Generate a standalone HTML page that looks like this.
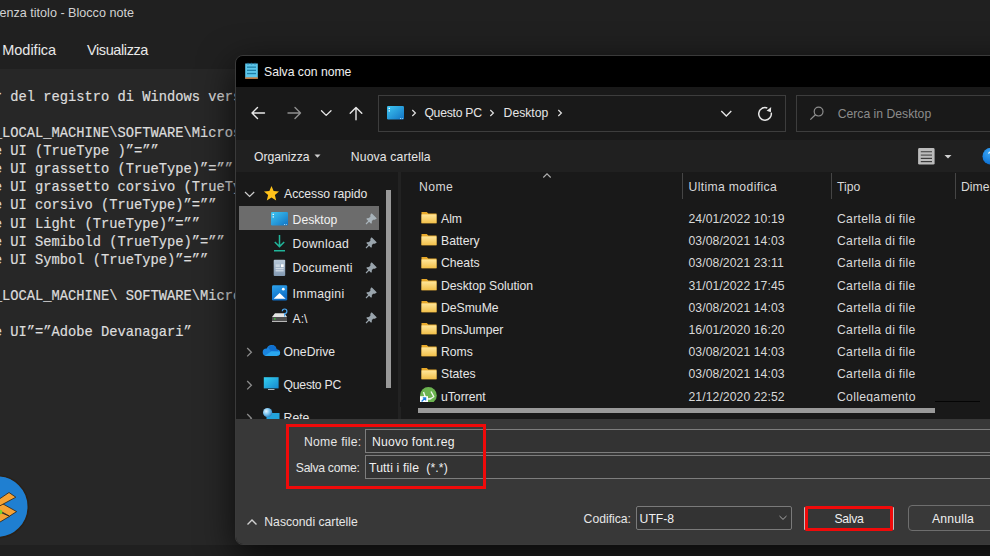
<!DOCTYPE html>
<html><head><meta charset="utf-8"><style>
html,body{margin:0;padding:0;width:990px;height:556px;overflow:hidden;background:#202020}
.t{position:absolute;white-space:pre}
.r{position:absolute}
svg.r{overflow:visible}
</style></head><body>
<div class="r" style="left:0px;top:0px;width:990px;height:69px;background:#202020"></div>
<div class="r" style="left:0px;top:69px;width:990px;height:476px;background:#272727"></div>
<div class="r" style="left:0px;top:545px;width:990px;height:11px;background:#202020"></div>
<div class="t" style="left:-0.50px;top:4.63px;font-size:12.6px;line-height:16px;color:#d2d2d2;font-family:'Liberation Sans',sans-serif;">enza titolo - Blocco note</div>
<div class="t" style="left:2.20px;top:41.07px;font-size:14.5px;line-height:19px;color:#e8e8e8;font-family:'Liberation Sans',sans-serif;">Modifica</div>
<div class="t" style="left:87.00px;top:41.07px;font-size:14.5px;line-height:19px;color:#e8e8e8;font-family:'Liberation Sans',sans-serif;letter-spacing:-0.4px">Visualizza</div>
<div class="t" style="left:-6.30px;top:88.64px;font-size:13.75px;line-height:18px;color:#dcdcdc;font-family:'Liberation Mono',monospace;white-space:pre;-webkit-text-stroke:0.2px #dcdcdc">r del registro di Windows versione 5.00</div>
<div class="t" style="left:-6.30px;top:124.94px;font-size:13.75px;line-height:18px;color:#dcdcdc;font-family:'Liberation Mono',monospace;white-space:pre;-webkit-text-stroke:0.2px #dcdcdc">_LOCAL_MACHINE\SOFTWARE\Microsoft\Windows NT</div>
<div class="t" style="left:-6.30px;top:143.04px;font-size:13.75px;line-height:18px;color:#dcdcdc;font-family:'Liberation Mono',monospace;white-space:pre;-webkit-text-stroke:0.2px #dcdcdc">e UI (TrueType )”=””</div>
<div class="t" style="left:-6.30px;top:161.14px;font-size:13.75px;line-height:18px;color:#dcdcdc;font-family:'Liberation Mono',monospace;white-space:pre;-webkit-text-stroke:0.2px #dcdcdc">e UI grassetto (TrueType)”=””</div>
<div class="t" style="left:-6.30px;top:179.34px;font-size:13.75px;line-height:18px;color:#dcdcdc;font-family:'Liberation Mono',monospace;white-space:pre;-webkit-text-stroke:0.2px #dcdcdc">e UI grassetto corsivo (TrueType)”=””</div>
<div class="t" style="left:-6.30px;top:197.44px;font-size:13.75px;line-height:18px;color:#dcdcdc;font-family:'Liberation Mono',monospace;white-space:pre;-webkit-text-stroke:0.2px #dcdcdc">e UI corsivo (TrueType)”=””</div>
<div class="t" style="left:-6.30px;top:215.64px;font-size:13.75px;line-height:18px;color:#dcdcdc;font-family:'Liberation Mono',monospace;white-space:pre;-webkit-text-stroke:0.2px #dcdcdc">e UI Light (TrueType)”=””</div>
<div class="t" style="left:-6.30px;top:233.74px;font-size:13.75px;line-height:18px;color:#dcdcdc;font-family:'Liberation Mono',monospace;white-space:pre;-webkit-text-stroke:0.2px #dcdcdc">e UI Semibold (TrueType)”=””</div>
<div class="t" style="left:-6.30px;top:251.84px;font-size:13.75px;line-height:18px;color:#dcdcdc;font-family:'Liberation Mono',monospace;white-space:pre;-webkit-text-stroke:0.2px #dcdcdc">e UI Symbol (TrueType)”=””</div>
<div class="t" style="left:-6.30px;top:288.14px;font-size:13.75px;line-height:18px;color:#dcdcdc;font-family:'Liberation Mono',monospace;white-space:pre;-webkit-text-stroke:0.2px #dcdcdc">_LOCAL_MACHINE\ SOFTWARE\Microsoft\Windows NT</div>
<div class="t" style="left:-6.30px;top:324.44px;font-size:13.75px;line-height:18px;color:#dcdcdc;font-family:'Liberation Mono',monospace;white-space:pre;-webkit-text-stroke:0.2px #dcdcdc">e UI”=”Adobe Devanagari”</div>
<svg class="r" style="left:0;top:474px" width="30" height="66" viewBox="0 474 30 66">
<circle cx="-2.7" cy="506.7" r="31" fill="#1f7fd1" stroke="#2a2118" stroke-width="1.6"/>
<polygon points="-3,510.8 9.6,516.3 -3,523.8" fill="#f4a235" stroke="#2a2118" stroke-width="0.8"/>
<polygon points="-3,500.6 16.6,511.6 9.6,516.1 -3,509.4" fill="#f4a235" stroke="#2a2118" stroke-width="0.8" stroke-linejoin="round"/>
<polygon points="-3,500.6 9,492.5 15.8,497.2 -3,507.4" fill="#f4a235" stroke="#2a2118" stroke-width="0.8" stroke-linejoin="round"/>
<circle cx="0.2" cy="512" r="2.2" fill="#7ad12a"/>
</svg>
<div class="r" style="left:235px;top:55px;width:800px;height:490px;border-radius:8px;box-shadow:0 10px 36px rgba(0,0,0,0.75)"></div>
<div class="r" style="left:235px;top:55px;width:800px;height:490px;border-radius:8px;overflow:hidden;background:#191919;border:1px solid #3a3a3a;box-sizing:border-box">
</div>
<div class="r" style="left:236px;top:56px;width:754px;height:31px;background:#000;border-top-left-radius:7px"></div>
<div class="r" style="left:236px;top:87px;width:754px;height:53px;background:#191919"></div>
<div class="r" style="left:236px;top:140px;width:754px;height:32px;background:#202020"></div>
<div class="r" style="left:236px;top:172px;width:754px;height:246px;background:#191919"></div>
<svg class="r" style="left:244px;top:62px" width="16" height="19" viewBox="0 0 16 19">
<rect x="1.2" y="1.5" width="12.6" height="15" fill="#5cc6ea"/>
<rect x="1.2" y="15.3" width="12.6" height="1.6" fill="#c9793e"/>
<rect x="3" y="4.5" width="9" height="1.3" fill="#1f7fa6"/>
<rect x="3" y="7.7" width="9" height="1.3" fill="#1f7fa6"/>
<rect x="3" y="10.9" width="9" height="1.3" fill="#1f7fa6"/>
<circle cx="4" cy="1.6" r="0.9" fill="#1f6f96"/><circle cx="7.5" cy="1.6" r="0.9" fill="#1f6f96"/><circle cx="11" cy="1.6" r="0.9" fill="#1f6f96"/>
</svg>
<div class="t" style="left:264.00px;top:64.27px;font-size:12.2px;line-height:16px;color:#f0f0f0;font-family:'Liberation Sans',sans-serif;">Salva con nome</div>
<svg class="r" style="left:245px;top:100px" width="130" height="26" viewBox="245 100 130 26">
<g fill="none" stroke-linecap="round" stroke-linejoin="round">
<path d="M252 113 H264.5 M252 113 L257.5 107.6 M252 113 L257.5 118.4" stroke="#e8e8e8" stroke-width="1.4"/>
<path d="M300.5 113 H288 M300.5 113 L295 107.6 M300.5 113 L295 118.4" stroke="#8f8f8f" stroke-width="1.4"/>
<path d="M321.5 110.8 L326.2 115.4 L331 110.8" stroke="#e8e8e8" stroke-width="1.3"/>
<path d="M356 119.8 V107.6 M350.2 113.2 L356 107.4 L361.8 113.2" stroke="#e8e8e8" stroke-width="1.4"/>
</g></svg>
<div class="r" style="left:378px;top:95px;width:408px;height:37px;border:1px solid #3d3d3d;box-sizing:border-box"></div>
<svg class="r" style="left:387px;top:105.5px" width="17" height="13.5" viewBox="0 0 17 13.5">
<defs><linearGradient id="dg387105" x1="0" y1="0" x2="1" y2="1"><stop offset="0" stop-color="#3ec6f2"/><stop offset="1" stop-color="#1273c4"/></linearGradient></defs>
<rect x="0" y="0" width="17" height="13.5" rx="1.2" fill="url(#dg387105)"/>
<rect x="1.6" y="1.8" width="1.3" height="1.2" fill="#fff"/><rect x="1.6" y="4.3" width="1.3" height="1.2" fill="#fff"/>
<rect x="13" y="12.2" width="1" height="0.8" fill="#bfe6ff"/><rect x="14.8" y="12.2" width="1" height="0.8" fill="#bfe6ff"/>
</svg>
<svg class="r" style="left:410.5px;top:109px" width="6" height="8" viewBox="0 0 6 8"><path d="M1.3 1 L4.4 4 L1.3 7" fill="none" stroke="#e0e0e0" stroke-width="1.2"/></svg>
<div class="t" style="left:424.40px;top:105.37px;font-size:12.2px;line-height:16px;color:#e6e6e6;font-family:'Liberation Sans',sans-serif;letter-spacing:-0.25px">Questo PC</div>
<svg class="r" style="left:489px;top:109px" width="6" height="8" viewBox="0 0 6 8"><path d="M1.3 1 L4.4 4 L1.3 7" fill="none" stroke="#e0e0e0" stroke-width="1.2"/></svg>
<div class="t" style="left:503.60px;top:105.37px;font-size:12.2px;line-height:16px;color:#e6e6e6;font-family:'Liberation Sans',sans-serif;">Desktop</div>
<svg class="r" style="left:556.5px;top:109px" width="6" height="8" viewBox="0 0 6 8"><path d="M1.3 1 L4.4 4 L1.3 7" fill="none" stroke="#e0e0e0" stroke-width="1.2"/></svg>
<svg class="r" style="left:715px;top:100px" width="65" height="26" viewBox="715 100 65 26">
<path d="M721.3 111 L726.3 116 L731.3 111" fill="none" stroke="#e6e6e6" stroke-width="1.3"/>
<path d="M767.3 108 A6.3 6.3 0 1 0 771.2 112.6" fill="none" stroke="#e6e6e6" stroke-width="1.5"/>
<path d="M771.2 107 L770.9 112.2 L766.6 110.8 Z" fill="#e6e6e6"/>
</svg>
<div class="r" style="left:796px;top:95px;width:204px;height:37px;border:1px solid #3d3d3d;box-sizing:border-box"></div>
<svg class="r" style="left:806px;top:104px" width="20" height="18" viewBox="806 104 20 18">
<circle cx="818.6" cy="111.6" r="4.4" fill="none" stroke="#8e8e8e" stroke-width="1.2"/>
<path d="M815.4 114.8 L810.3 119.6" stroke="#8e8e8e" stroke-width="1.3"/>
</svg>
<div class="t" style="left:837.70px;top:106.47px;font-size:12.2px;line-height:16px;color:#8c8c8c;font-family:'Liberation Sans',sans-serif;">Cerca in Desktop</div>
<div class="t" style="left:254.00px;top:149.37px;font-size:12.2px;line-height:16px;color:#e6e6e6;font-family:'Liberation Sans',sans-serif;">Organizza</div>
<svg class="r" style="left:313px;top:153px" width="9" height="6" viewBox="0 0 9 6"><path d="M1.5 1.5 H7.5 L4.5 4.8 Z" fill="#d0d0d0"/></svg>
<div class="t" style="left:350.80px;top:149.37px;font-size:12.2px;line-height:16px;color:#e6e6e6;font-family:'Liberation Sans',sans-serif;letter-spacing:0.15px">Nuova cartella</div>
<svg class="r" style="left:916px;top:147px" width="40" height="20" viewBox="916 147 40 20">
<rect x="918.1" y="148.1" width="16.5" height="16.5" rx="1.3" fill="#bcbcbc"/>
<rect x="920.8" y="151.1" width="11.2" height="1.2" fill="#505050"/>
<rect x="920.8" y="154.5" width="11.2" height="1.2" fill="#505050"/>
<rect x="920.8" y="157.8" width="11.2" height="1.2" fill="#3c3c3c"/>
<rect x="920.8" y="161.0" width="11.2" height="1.2" fill="#3c3c3c"/>
<path d="M944.5 155 H951.5 L948 158.5 Z" fill="#d0d0d0"/>
</svg>
<svg class="r" style="left:980px;top:146px" width="20" height="21" viewBox="980 146 20 21"><defs><radialGradient id="hg" cx="0.4" cy="0.3" r="0.7"><stop offset="0" stop-color="#3aa6f5"/><stop offset="1" stop-color="#0b6fd3"/></radialGradient></defs><circle cx="991" cy="156.2" r="8.5" fill="url(#hg)"/><path d="M988.5 153.6 A2.8 2.8 0 0 1 993.2 152.6" fill="none" stroke="#e8f4ff" stroke-width="1.3"/></svg>
<svg class="r" style="left:243px;top:190px" width="14" height="9" viewBox="0 0 14 9"><path d="M2 2 L6.6 6.5 L11.2 2" fill="none" stroke="#cfcfcf" stroke-width="1.2"/></svg>
<svg class="r" style="left:263px;top:185px" width="17" height="17" viewBox="0 0 24 24"><path d="M12 1.5 L15 8.6 L22.6 9.2 L16.8 14.2 L18.6 21.8 L12 17.8 L5.4 21.8 L7.2 14.2 L1.4 9.2 L9 8.6 Z" fill="#ffc21a"/></svg>
<div class="t" style="left:284.00px;top:186.37px;font-size:12.2px;line-height:16px;color:#e6e6e6;font-family:'Liberation Sans',sans-serif;">Accesso rapido</div>
<div class="r" style="left:239px;top:206px;width:140px;height:24px;background:#6c6c6c"></div>
<svg class="r" style="left:271px;top:211.5px" width="17" height="13.5" viewBox="0 0 17 13.5">
<defs><linearGradient id="dg271211" x1="0" y1="0" x2="1" y2="1"><stop offset="0" stop-color="#3ec6f2"/><stop offset="1" stop-color="#1273c4"/></linearGradient></defs>
<rect x="0" y="0" width="17" height="13.5" rx="1.2" fill="url(#dg271211)"/>
<rect x="1.6" y="1.8" width="1.3" height="1.2" fill="#fff"/><rect x="1.6" y="4.3" width="1.3" height="1.2" fill="#fff"/>
<rect x="13" y="12.2" width="1" height="0.8" fill="#bfe6ff"/><rect x="14.8" y="12.2" width="1" height="0.8" fill="#bfe6ff"/>
</svg>
<div class="t" style="left:292.60px;top:211.77px;font-size:12.2px;line-height:16px;color:#f2f2f2;font-family:'Liberation Sans',sans-serif;">Desktop</div>
<svg class="r" style="left:364.5px;top:213px" width="12" height="12" viewBox="0 0 12 12"><path d="M6.5 1 L11 5.5 L9.8 6.1 L7.8 6.1 L6.2 8.3 L6.2 10 L2 5.8 L3.7 5.8 L5.9 4.2 L5.9 2.2 Z M4 8 L1 11" fill="#a9b4bb" stroke="#a9b4bb" stroke-width="1.1" stroke-linejoin="round"/></svg>
<svg class="r" style="left:272px;top:234px" width="15" height="19" viewBox="0 0 15 19"><path d="M7.5 1 V12.5 M2.8 8 L7.5 12.6 L12.2 8" fill="none" stroke="#21b59a" stroke-width="1.5"/><rect x="2" y="16" width="11" height="1.5" fill="#21b59a"/></svg>
<div class="t" style="left:292.60px;top:235.77px;font-size:12.2px;line-height:16px;color:#e6e6e6;font-family:'Liberation Sans',sans-serif;letter-spacing:0.3px">Download</div>
<svg class="r" style="left:364.5px;top:237px" width="12" height="12" viewBox="0 0 12 12"><path d="M6.5 1 L11 5.5 L9.8 6.1 L7.8 6.1 L6.2 8.3 L6.2 10 L2 5.8 L3.7 5.8 L5.9 4.2 L5.9 2.2 Z M4 8 L1 11" fill="#9aa5ad" stroke="#9aa5ad" stroke-width="1.1" stroke-linejoin="round"/></svg>
<svg class="r" style="left:273px;top:259px" width="13" height="18" viewBox="273 259 13 18"><defs><linearGradient id="docg" x1="0" y1="0" x2="0" y2="1"><stop offset="0" stop-color="#b9c9d9"/><stop offset="1" stop-color="#8299b2"/></linearGradient></defs><rect x="273.7" y="259.7" width="11.5" height="16.4" rx="1" fill="url(#docg)"/><rect x="275.6" y="264.3" width="4.2" height="2.8" fill="#c9d5e0"/><rect x="281" y="264.3" width="2.6" height="2.8" fill="#ffffff"/><rect x="275.6" y="268.3" width="8" height="0.9" fill="#e8eef4"/><rect x="275.6" y="270.4" width="8" height="0.9" fill="#e8eef4"/></svg>
<div class="t" style="left:292.60px;top:260.17px;font-size:12.2px;line-height:16px;color:#e6e6e6;font-family:'Liberation Sans',sans-serif;letter-spacing:0.2px">Documenti</div>
<svg class="r" style="left:364.5px;top:262px" width="12" height="12" viewBox="0 0 12 12"><path d="M6.5 1 L11 5.5 L9.8 6.1 L7.8 6.1 L6.2 8.3 L6.2 10 L2 5.8 L3.7 5.8 L5.9 4.2 L5.9 2.2 Z M4 8 L1 11" fill="#9aa5ad" stroke="#9aa5ad" stroke-width="1.1" stroke-linejoin="round"/></svg>
<svg class="r" style="left:271px;top:284px" width="18" height="18" viewBox="271 284 18 18"><defs><linearGradient id="imgg" x1="0" y1="0" x2="0.3" y2="1"><stop offset="0" stop-color="#2ea3ec"/><stop offset="1" stop-color="#0b6cc6"/></linearGradient></defs><rect x="272" y="285.2" width="15.2" height="15.4" rx="1.4" fill="url(#imgg)"/><path d="M273.6 298.8 L279.6 293 L285.6 298.8 Z" fill="#ffffff"/><circle cx="283.3" cy="289.2" r="1.4" fill="#ffffff"/></svg>
<div class="t" style="left:292.60px;top:285.77px;font-size:12.2px;line-height:16px;color:#e6e6e6;font-family:'Liberation Sans',sans-serif;letter-spacing:0.3px">Immagini</div>
<svg class="r" style="left:364.5px;top:287px" width="12" height="12" viewBox="0 0 12 12"><path d="M6.5 1 L11 5.5 L9.8 6.1 L7.8 6.1 L6.2 8.3 L6.2 10 L2 5.8 L3.7 5.8 L5.9 4.2 L5.9 2.2 Z M4 8 L1 11" fill="#9aa5ad" stroke="#9aa5ad" stroke-width="1.1" stroke-linejoin="round"/></svg>
<svg class="r" style="left:271px;top:307px" width="18" height="17" viewBox="271 307 18 17"><path d="M272 317 L275 313.2 H284.5 L287 317 Z" fill="#e4e4e4"/><rect x="272" y="317" width="15" height="4.8" rx="0.6" fill="#4e4e4e"/><rect x="272" y="321" width="15" height="1" fill="#b8b8b8"/><rect x="274" y="318.2" width="1.6" height="1.4" fill="#33c233"/><path d="M282.3 311.2 A2.3 2.3 0 1 1 284.6 313.6 V316.5" fill="none" stroke="#4aa6ef" stroke-width="1.2"/></svg>
<div class="t" style="left:292.60px;top:310.77px;font-size:12.2px;line-height:16px;color:#e6e6e6;font-family:'Liberation Sans',sans-serif;">A:\</div>
<svg class="r" style="left:364.5px;top:312px" width="12" height="12" viewBox="0 0 12 12"><path d="M6.5 1 L11 5.5 L9.8 6.1 L7.8 6.1 L6.2 8.3 L6.2 10 L2 5.8 L3.7 5.8 L5.9 4.2 L5.9 2.2 Z M4 8 L1 11" fill="#9aa5ad" stroke="#9aa5ad" stroke-width="1.1" stroke-linejoin="round"/></svg>
<svg class="r" style="left:245.5px;top:346.8px" width="8" height="11" viewBox="0 0 8 11"><path d="M1.2 1 L5.4 5.2 L1.2 9.4" fill="none" stroke="#8c8c8c" stroke-width="1.3"/></svg>
<svg class="r" style="left:261px;top:343px" width="21" height="15" viewBox="261 343 21 15"><defs><clipPath id="cld"><circle cx="266.4" cy="352.2" r="3.7"/><circle cx="271.6" cy="349.8" r="4.9"/><circle cx="276.9" cy="352.6" r="3.2"/><rect x="266.4" y="351" width="10.5" height="4.9"/></clipPath></defs><g clip-path="url(#cld)"><rect x="261" y="343" width="21" height="15" fill="#1a84de"/><path d="M268 347 L276 344 L278 351 L271 351.5 Z" fill="#0f6fcf"/><path d="M263 357 L271.5 351.3 L281 351.8 L281 357 Z" fill="#2aa7ef"/></g></svg>
<div class="t" style="left:283.60px;top:343.77px;font-size:12.2px;line-height:16px;color:#e6e6e6;font-family:'Liberation Sans',sans-serif;">OneDrive</div>
<svg class="r" style="left:245.5px;top:380px" width="8" height="11" viewBox="0 0 8 11"><path d="M1.2 1 L5.4 5.2 L1.2 9.4" fill="none" stroke="#8c8c8c" stroke-width="1.3"/></svg>
<svg class="r" style="left:263px;top:376px" width="17" height="16" viewBox="263 376 17 16"><defs><linearGradient id="pcg" x1="0" y1="0" x2="1" y2="1"><stop offset="0" stop-color="#34d0f0"/><stop offset="1" stop-color="#1688cf"/></linearGradient></defs><rect x="263.8" y="377.2" width="14.8" height="11.2" fill="url(#pcg)"/><rect x="268" y="389" width="6.5" height="0.9" fill="#c0c8cc"/></svg>
<div class="t" style="left:283.60px;top:376.77px;font-size:12.2px;line-height:16px;color:#e6e6e6;font-family:'Liberation Sans',sans-serif;letter-spacing:-0.25px">Questo PC</div>
<svg class="r" style="left:245.5px;top:413px" width="8" height="11" viewBox="0 0 8 11"><path d="M1.2 1 L5.4 5.2 L1.2 9.4" fill="none" stroke="#8c8c8c" stroke-width="1.3"/></svg>
<svg class="r" style="left:262px;top:406px" width="18" height="14" viewBox="262 406 18 14"><rect x="266.5" y="413" width="13" height="7" fill="#23a3dc"/><defs><radialGradient id="glb" cx="0.35" cy="0.35" r="0.7"><stop offset="0" stop-color="#e8f6ff"/><stop offset="0.5" stop-color="#7cc4ee"/><stop offset="1" stop-color="#2a7fc0"/></radialGradient></defs><circle cx="267.6" cy="412.6" r="4.6" fill="url(#glb)"/></svg>
<div class="t" style="left:283.60px;top:409.77px;font-size:12.2px;line-height:16px;color:#e6e6e6;font-family:'Liberation Sans',sans-serif;">Rete</div>
<div class="r" style="left:386px;top:190px;width:5px;height:198px;background:#999999"></div>
<div class="r" style="left:398px;top:172px;width:3px;height:247px;background:#222222"></div>
<svg class="r" style="left:541px;top:171px" width="12" height="9" viewBox="0 0 12 9"><path d="M2.3 6.5 L6 2.8 L9.7 6.5" fill="none" stroke="#b0b0b0" stroke-width="1.1"/></svg>
<div class="t" style="left:419.00px;top:178.77px;font-size:12.2px;line-height:16px;color:#d8d8d8;font-family:'Liberation Sans',sans-serif;letter-spacing:0.4px">Nome</div>
<div class="r" style="left:681.5px;top:173px;width:1.0px;height:26px;background:#454545"></div>
<div class="r" style="left:830.5px;top:173px;width:1.0px;height:26px;background:#454545"></div>
<div class="r" style="left:954.5px;top:173px;width:1.0px;height:26px;background:#454545"></div>
<div class="t" style="left:688.50px;top:179.27px;font-size:12.2px;line-height:16px;color:#d8d8d8;font-family:'Liberation Sans',sans-serif;letter-spacing:0.35px">Ultima modifica</div>
<div class="t" style="left:837.00px;top:179.27px;font-size:12.2px;line-height:16px;color:#d8d8d8;font-family:'Liberation Sans',sans-serif;">Tipo</div>
<div class="t" style="left:961.00px;top:179.27px;font-size:12.2px;line-height:16px;color:#d8d8d8;font-family:'Liberation Sans',sans-serif;">Dime</div>
<svg class="r" style="left:420.5px;top:211.1px" width="16" height="13" viewBox="0 0 16 13">
<defs><linearGradient id="fg211" x1="0" y1="0" x2="0" y2="1"><stop offset="0" stop-color="#ffe69a"/><stop offset="1" stop-color="#f2c04a"/></linearGradient></defs>
<path d="M0.5 1 H5.8 L7.3 2.4 H15.5 V12.2 H0.5 Z" fill="#e8a92a"/>
<rect x="0.5" y="3.4" width="15" height="8.8" fill="url(#fg211)"/>
</svg>
<div class="t" style="left:441.00px;top:210.87px;font-size:12.2px;line-height:16px;color:#e6e6e6;font-family:'Liberation Sans',sans-serif;">Alm</div>
<div class="t" style="left:688.50px;top:210.87px;font-size:12.2px;line-height:16px;color:#d8d8d8;font-family:'Liberation Sans',sans-serif;letter-spacing:0.08px">24/01/2022 10:19</div>
<div class="t" style="left:837.00px;top:210.87px;font-size:12.2px;line-height:16px;color:#d8d8d8;font-family:'Liberation Sans',sans-serif;letter-spacing:0.3px">Cartella di file</div>
<svg class="r" style="left:420.5px;top:233.32999999999998px" width="16" height="13" viewBox="0 0 16 13">
<defs><linearGradient id="fg233" x1="0" y1="0" x2="0" y2="1"><stop offset="0" stop-color="#ffe69a"/><stop offset="1" stop-color="#f2c04a"/></linearGradient></defs>
<path d="M0.5 1 H5.8 L7.3 2.4 H15.5 V12.2 H0.5 Z" fill="#e8a92a"/>
<rect x="0.5" y="3.4" width="15" height="8.8" fill="url(#fg233)"/>
</svg>
<div class="t" style="left:441.00px;top:233.10px;font-size:12.2px;line-height:16px;color:#e6e6e6;font-family:'Liberation Sans',sans-serif;">Battery</div>
<div class="t" style="left:688.50px;top:233.10px;font-size:12.2px;line-height:16px;color:#d8d8d8;font-family:'Liberation Sans',sans-serif;letter-spacing:0.08px">03/08/2021 14:03</div>
<div class="t" style="left:837.00px;top:233.10px;font-size:12.2px;line-height:16px;color:#d8d8d8;font-family:'Liberation Sans',sans-serif;letter-spacing:0.3px">Cartella di file</div>
<svg class="r" style="left:420.5px;top:255.56px" width="16" height="13" viewBox="0 0 16 13">
<defs><linearGradient id="fg255" x1="0" y1="0" x2="0" y2="1"><stop offset="0" stop-color="#ffe69a"/><stop offset="1" stop-color="#f2c04a"/></linearGradient></defs>
<path d="M0.5 1 H5.8 L7.3 2.4 H15.5 V12.2 H0.5 Z" fill="#e8a92a"/>
<rect x="0.5" y="3.4" width="15" height="8.8" fill="url(#fg255)"/>
</svg>
<div class="t" style="left:441.00px;top:255.33px;font-size:12.2px;line-height:16px;color:#e6e6e6;font-family:'Liberation Sans',sans-serif;">Cheats</div>
<div class="t" style="left:688.50px;top:255.33px;font-size:12.2px;line-height:16px;color:#d8d8d8;font-family:'Liberation Sans',sans-serif;letter-spacing:0.08px">03/08/2021 23:11</div>
<div class="t" style="left:837.00px;top:255.33px;font-size:12.2px;line-height:16px;color:#d8d8d8;font-family:'Liberation Sans',sans-serif;letter-spacing:0.3px">Cartella di file</div>
<svg class="r" style="left:420.5px;top:277.78999999999996px" width="16" height="13" viewBox="0 0 16 13">
<defs><linearGradient id="fg277" x1="0" y1="0" x2="0" y2="1"><stop offset="0" stop-color="#ffe69a"/><stop offset="1" stop-color="#f2c04a"/></linearGradient></defs>
<path d="M0.5 1 H5.8 L7.3 2.4 H15.5 V12.2 H0.5 Z" fill="#e8a92a"/>
<rect x="0.5" y="3.4" width="15" height="8.8" fill="url(#fg277)"/>
</svg>
<div class="t" style="left:441.00px;top:277.56px;font-size:12.2px;line-height:16px;color:#e6e6e6;font-family:'Liberation Sans',sans-serif;">Desktop Solution</div>
<div class="t" style="left:688.50px;top:277.56px;font-size:12.2px;line-height:16px;color:#d8d8d8;font-family:'Liberation Sans',sans-serif;letter-spacing:0.08px">31/01/2022 17:45</div>
<div class="t" style="left:837.00px;top:277.56px;font-size:12.2px;line-height:16px;color:#d8d8d8;font-family:'Liberation Sans',sans-serif;letter-spacing:0.3px">Cartella di file</div>
<svg class="r" style="left:420.5px;top:300.02px" width="16" height="13" viewBox="0 0 16 13">
<defs><linearGradient id="fg300" x1="0" y1="0" x2="0" y2="1"><stop offset="0" stop-color="#ffe69a"/><stop offset="1" stop-color="#f2c04a"/></linearGradient></defs>
<path d="M0.5 1 H5.8 L7.3 2.4 H15.5 V12.2 H0.5 Z" fill="#e8a92a"/>
<rect x="0.5" y="3.4" width="15" height="8.8" fill="url(#fg300)"/>
</svg>
<div class="t" style="left:441.00px;top:299.79px;font-size:12.2px;line-height:16px;color:#e6e6e6;font-family:'Liberation Sans',sans-serif;">DeSmuMe</div>
<div class="t" style="left:688.50px;top:299.79px;font-size:12.2px;line-height:16px;color:#d8d8d8;font-family:'Liberation Sans',sans-serif;letter-spacing:0.08px">03/08/2021 14:03</div>
<div class="t" style="left:837.00px;top:299.79px;font-size:12.2px;line-height:16px;color:#d8d8d8;font-family:'Liberation Sans',sans-serif;letter-spacing:0.3px">Cartella di file</div>
<svg class="r" style="left:420.5px;top:322.25px" width="16" height="13" viewBox="0 0 16 13">
<defs><linearGradient id="fg322" x1="0" y1="0" x2="0" y2="1"><stop offset="0" stop-color="#ffe69a"/><stop offset="1" stop-color="#f2c04a"/></linearGradient></defs>
<path d="M0.5 1 H5.8 L7.3 2.4 H15.5 V12.2 H0.5 Z" fill="#e8a92a"/>
<rect x="0.5" y="3.4" width="15" height="8.8" fill="url(#fg322)"/>
</svg>
<div class="t" style="left:441.00px;top:322.02px;font-size:12.2px;line-height:16px;color:#e6e6e6;font-family:'Liberation Sans',sans-serif;">DnsJumper</div>
<div class="t" style="left:688.50px;top:322.02px;font-size:12.2px;line-height:16px;color:#d8d8d8;font-family:'Liberation Sans',sans-serif;letter-spacing:0.08px">16/01/2020 16:20</div>
<div class="t" style="left:837.00px;top:322.02px;font-size:12.2px;line-height:16px;color:#d8d8d8;font-family:'Liberation Sans',sans-serif;letter-spacing:0.3px">Cartella di file</div>
<svg class="r" style="left:420.5px;top:344.48px" width="16" height="13" viewBox="0 0 16 13">
<defs><linearGradient id="fg344" x1="0" y1="0" x2="0" y2="1"><stop offset="0" stop-color="#ffe69a"/><stop offset="1" stop-color="#f2c04a"/></linearGradient></defs>
<path d="M0.5 1 H5.8 L7.3 2.4 H15.5 V12.2 H0.5 Z" fill="#e8a92a"/>
<rect x="0.5" y="3.4" width="15" height="8.8" fill="url(#fg344)"/>
</svg>
<div class="t" style="left:441.00px;top:344.25px;font-size:12.2px;line-height:16px;color:#e6e6e6;font-family:'Liberation Sans',sans-serif;">Roms</div>
<div class="t" style="left:688.50px;top:344.25px;font-size:12.2px;line-height:16px;color:#d8d8d8;font-family:'Liberation Sans',sans-serif;letter-spacing:0.08px">03/08/2021 14:03</div>
<div class="t" style="left:837.00px;top:344.25px;font-size:12.2px;line-height:16px;color:#d8d8d8;font-family:'Liberation Sans',sans-serif;letter-spacing:0.3px">Cartella di file</div>
<svg class="r" style="left:420.5px;top:366.71000000000004px" width="16" height="13" viewBox="0 0 16 13">
<defs><linearGradient id="fg366" x1="0" y1="0" x2="0" y2="1"><stop offset="0" stop-color="#ffe69a"/><stop offset="1" stop-color="#f2c04a"/></linearGradient></defs>
<path d="M0.5 1 H5.8 L7.3 2.4 H15.5 V12.2 H0.5 Z" fill="#e8a92a"/>
<rect x="0.5" y="3.4" width="15" height="8.8" fill="url(#fg366)"/>
</svg>
<div class="t" style="left:441.00px;top:366.48px;font-size:12.2px;line-height:16px;color:#e6e6e6;font-family:'Liberation Sans',sans-serif;">States</div>
<div class="t" style="left:688.50px;top:366.48px;font-size:12.2px;line-height:16px;color:#d8d8d8;font-family:'Liberation Sans',sans-serif;letter-spacing:0.08px">03/08/2021 14:03</div>
<div class="t" style="left:837.00px;top:366.48px;font-size:12.2px;line-height:16px;color:#d8d8d8;font-family:'Liberation Sans',sans-serif;letter-spacing:0.3px">Cartella di file</div>
<svg class="r" style="left:418px;top:385px" width="20" height="17" viewBox="418 385 20 17"><circle cx="428.4" cy="395.4" r="8.4" fill="#6cb350"/><path d="M423.5 392 L425.5 397.5 Q428 400 431 398.5 L434 396.5 M431 391.5 L434 397" fill="none" stroke="#f2f7ee" stroke-width="1.4"/><rect x="420" y="396.2" width="8" height="6" fill="#ffffff"/><path d="M421.6 401.5 L425.4 397.8 M422.8 397.8 H425.6 V400.5" fill="none" stroke="#1a7de0" stroke-width="1.3"/></svg>
<div class="t" style="left:441.00px;top:388.71px;font-size:12.2px;line-height:16px;color:#e6e6e6;font-family:'Liberation Sans',sans-serif;">uTorrent</div>
<div class="t" style="left:688.50px;top:388.71px;font-size:12.2px;line-height:16px;color:#d8d8d8;font-family:'Liberation Sans',sans-serif;letter-spacing:0.08px">21/12/2020 22:52</div>
<div class="t" style="left:837.00px;top:388.71px;font-size:12.2px;line-height:16px;color:#d8d8d8;font-family:'Liberation Sans',sans-serif;letter-spacing:0.3px">Colleqamento</div>
<div class="r" style="left:400px;top:402px;width:590px;height:5px;background:#191919"></div>
<div class="r" style="left:935px;top:401px;width:45px;height:1px;background:#050505"></div>
<div class="r" style="left:418px;top:408px;width:517px;height:5px;background:#9a9a9a"></div>
<div class="r" style="left:236px;top:419px;width:754px;height:125px;background:#383838;border-bottom-left-radius:7px"></div>
<div class="t" style="left:304.00px;top:433.97px;font-size:12.2px;line-height:16px;color:#e6e6e6;font-family:'Liberation Sans',sans-serif;letter-spacing:0.25px">Nome file:</div>
<div class="r" style="left:365px;top:429px;width:635px;height:24px;background:#333333;border:1px solid #7d7d7d;box-sizing:border-box"></div>
<div class="t" style="left:372.00px;top:433.57px;font-size:12.2px;line-height:16px;color:#f0f0f0;font-family:'Liberation Sans',sans-serif;letter-spacing:0.2px">Nuovo font.reg</div>
<div class="t" style="left:295.80px;top:459.97px;font-size:12.2px;line-height:16px;color:#e6e6e6;font-family:'Liberation Sans',sans-serif;letter-spacing:-0.3px">Salva come:</div>
<div class="r" style="left:365px;top:455px;width:635px;height:24px;background:#333333;border:1px solid #7d7d7d;box-sizing:border-box"></div>
<div class="t" style="left:369.00px;top:459.97px;font-size:12.2px;line-height:16px;color:#f0f0f0;font-family:'Liberation Sans',sans-serif;letter-spacing:0.15px">Tutti i file&nbsp; (*.*)</div>
<div class="r" style="left:286px;top:424px;width:200px;height:65px;border:3px solid #f00a0a;box-sizing:border-box"></div>
<svg class="r" style="left:245px;top:515.8px" width="14" height="12" viewBox="0 0 14 12"><path d="M2.5 8.5 L7 4 L11.5 8.5" fill="none" stroke="#d0d0d0" stroke-width="1.4"/></svg>
<div class="t" style="left:264.30px;top:514.17px;font-size:12.2px;line-height:16px;color:#e6e6e6;font-family:'Liberation Sans',sans-serif;">Nascondi cartelle</div>
<div class="t" style="left:583.60px;top:510.77px;font-size:12.2px;line-height:16px;color:#e6e6e6;font-family:'Liberation Sans',sans-serif;">Codifica:</div>
<div class="r" style="left:636px;top:506px;width:156px;height:24px;background:#333333;border:1px solid #7a7a7a;border-radius:2px;box-sizing:border-box"></div>
<div class="t" style="left:639.60px;top:510.77px;font-size:12.2px;line-height:16px;color:#f0f0f0;font-family:'Liberation Sans',sans-serif;">UTF-8</div>
<svg class="r" style="left:778px;top:513px" width="10" height="9" viewBox="0 0 10 9"><path d="M1.5 3 L5 6.4 L8.5 3" fill="none" stroke="#a8a8a8" stroke-width="1"/></svg>
<div class="r" style="left:804px;top:507px;width:90px;height:23px;background:#bdbdbd;border-radius:1px"></div>
<div class="r" style="left:805px;top:506px;width:88px;height:25px;background:#363636;border:3px solid #f00a0a;border-radius:1.5px;box-sizing:border-box"></div>
<div class="t" style="left:805.00px;top:510.77px;font-size:12.2px;line-height:16px;color:#f0f0f0;font-family:'Liberation Sans',sans-serif;width:88px;text-align:center;letter-spacing:-0.3px">Salva</div>
<div class="r" style="left:908px;top:505px;width:102px;height:26px;background:#393939;border:1px solid #6e6e6e;border-radius:4px;box-sizing:border-box"></div>
<div class="t" style="left:932.00px;top:510.77px;font-size:12.2px;line-height:16px;color:#f0f0f0;font-family:'Liberation Sans',sans-serif;letter-spacing:0.2px">Annulla</div>
</body></html>
